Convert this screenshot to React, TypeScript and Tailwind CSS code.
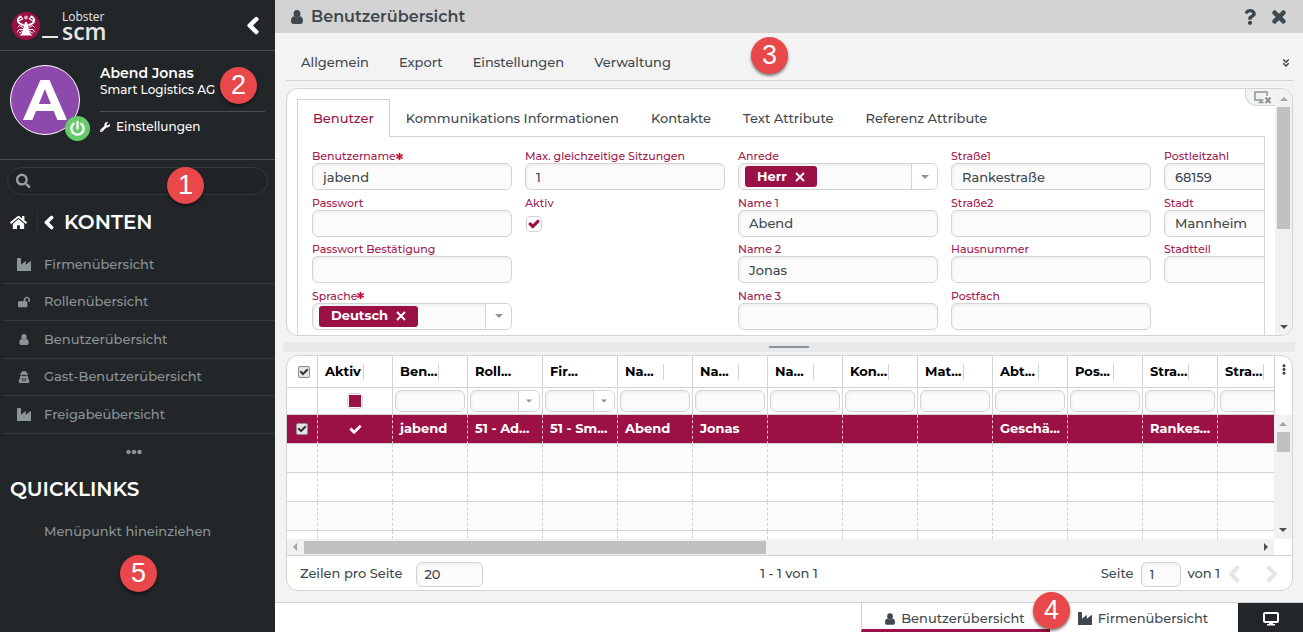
import React, { useState } from "react";
import type { ReactNode } from "react";
import {
  FaAngleDoubleDown,
  FaAsterisk,
  FaCheck,
  FaChevronLeft,
  FaChevronRight,
  FaEllipsisH,
  FaEllipsisV,
  FaHome,
  FaLockOpen,
  FaPowerOff,
  FaQuestion,
  FaSearch,
  FaTimes,
  FaUserSecret,
  FaWrench,
} from "react-icons/fa";

type IconProps = { className?: string };

function IndustryIcon({ className }: IconProps) {
  return (
    <svg viewBox="0 0 14 13" className={className} fill="currentColor" aria-hidden="true">
      <path d="M0 13V.6Q0 0 .6 0H3.400Q4 0 4 .6V6.800L8.300 3.200Q8.800 2.900 8.800 3.500V6.800L13.200 3.200Q14 2.800 14 3.500V13Z" />
    </svg>
  );
}

function UserIcon({ className }: IconProps) {
  return (
    <svg viewBox="0 0 12 14" className={className} fill="currentColor" aria-hidden="true">
      <ellipse cx="6" cy="3.800" rx="3.400" ry="3.800" />
      <path d="M2.700 6.300Q0 6.800 0 11.300Q0 14 2 14H10Q12 14 12 11.300Q12 6.800 9.300 6.300Q8 7.400 6 7.400Q4 7.400 2.700 6.300Z" />
    </svg>
  );
}

function DesktopIcon({ className }: IconProps) {
  return (
    <svg viewBox="0 0 16 14" className={className} aria-hidden="true">
      <rect x="1" y="1" width="14" height="9" rx="1" fill="none" stroke="currentColor" strokeWidth="2" />
      <path d="M6 10h4v2h2v1.500H4V12h2z" fill="currentColor" />
    </svg>
  );
}

function DetachIcon({ className }: IconProps) {
  return (
    <svg viewBox="0 0 18 13" className={className} fill="none" stroke="currentColor" aria-hidden="true">
      <path d="M9.500 9H1V1H13V5" strokeWidth="1.500" />
      <path d="M4.500 11.500H9.500M7 9V11.500" strokeWidth="1.500" />
      <path d="M11.500 6.500L16.500 12M16.500 6.500L11.500 12" strokeWidth="2.200" />
    </svg>
  );
}

function Lobster({ className }: IconProps) {
  return (
    <svg viewBox="0 0 28 28" className={className} aria-hidden="true">
      <circle cx="14" cy="14" r="14" fill="#9b1045" />
      <g fill="none" stroke="#fff" strokeLinecap="round">
        <path d="M8.500 4.500C4 7.500 5.500 11.500 11 13M19.500 4.500C24 7.500 22.500 11.500 17 13" strokeWidth="2" />
        <path d="M8.800 4.500L10.500 7L7.500 8.500M19.200 4.500L17.500 7L20.500 8.500" strokeWidth="1.300" />
        <path d="M11 15.500L7.500 13.500L6 15M10.500 17.500L7 17.500L5.500 20M10 19.500L7.500 21M17 15.500L20.500 13.500L22 15M17.500 17.500L21 17.500L22.500 20M18 19.500L20.500 21" strokeWidth="1" />
      </g>
      <circle cx="14" cy="5.500" r="1.900" fill="#e7a9c0" />
      <path d="M14 9.500C15.500 10.500 16 13 16.500 15.500C17 18 18 19.500 18 21L20.500 23.500H7.500L10 21C10 19.500 11 18 11.500 15.500C12 13 12.500 10.500 14 9.500Z" fill="#fff" />
    </svg>
  );
}

function Triangle({ dir, className }: { dir: "up" | "down" | "left" | "right"; className?: string }) {
  const d = {
    up: "M0 6L4 2L8 6Z",
    down: "M0 2L4 6L8 2Z",
    left: "M6 0L2 4L6 8Z",
    right: "M2 0L6 4L2 8Z",
  }[dir];
  return (
    <svg viewBox="0 0 8 8" className={`size-2 ${className ?? ""}`} fill="currentColor" aria-hidden="true">
      <path d={d} />
    </svg>
  );
}

function Marker({ n, className }: { n: number; className: string }) {
  return (
    <span
      className={`absolute z-10 flex size-[37px] items-center justify-center rounded-full bg-[#e84849] font-['Liberation_Sans',sans-serif] text-[27px] leading-none text-white shadow-[0_2px_3px_rgba(0,0,0,0.5)] ${className}`}
    >
      {n}
    </span>
  );
}

const FIELD =
  "rounded-md border border-[#d3d3d3] bg-[#fbfbfb] font-medium shadow-[inset_1px_2px_3px_rgba(0,0,0,0.05)] outline-none";

/* ---------- Sidebar ---------- */

const MENU = [
  { label: "Firmenübersicht", icon: <IndustryIcon className="h-[13px] w-3.5" /> },
  { label: "Rollenübersicht", icon: <FaLockOpen className="size-3" /> },
  { label: "Benutzerübersicht", icon: <UserIcon className="h-[11px] w-2.5" /> },
  { label: "Gast-Benutzerübersicht", icon: <FaUserSecret className="size-3" /> },
  { label: "Freigabeübersicht", icon: <IndustryIcon className="h-[13px] w-3.5" /> },
];

function Sidebar() {
  return (
    <aside className="relative flex w-[275px] shrink-0 flex-col bg-[#222629] text-white">
      <div className="flex h-[51px] items-center justify-between border-b border-[#4b4f51] pr-4 pl-3">
        <div className="flex items-end gap-0.5 text-[#e6e6e6]">
          <Lobster className="size-7" />
          <span className="mb-0.5 h-0.5 w-4 bg-[#e6e6e6]" />
          <span className="ml-0.5 flex flex-col font-['Open_Sans',sans-serif]">
            <span className="text-[12px] leading-[11px]">Lobster</span>
            <span className="text-[23px] leading-[18px] font-semibold">scm</span>
          </span>
        </div>
        <button aria-label="Menü einklappen">
          <FaChevronLeft className="h-[19px] w-3 overflow-visible stroke-current [stroke-width:40]" />
        </button>
      </div>

      <section className="flex h-[109px] gap-5 border-b border-[#4b4f51] pt-3.5 pr-2.5 pl-2.5">
        <div className="relative flex size-[70px] shrink-0 items-center justify-center rounded-full border border-white bg-[#8e49ac] text-[56px] leading-none font-bold">
          A
          <button
            aria-label="Abmelden"
            className="absolute -right-[11px] -bottom-[7px] flex size-[25px] items-center justify-center rounded-full bg-[#66cc6a]"
          >
            <FaPowerOff className="size-[15px]" />
          </button>
        </div>
        <div className="flex-1">
          <div className="text-[14px] leading-4 font-semibold">Abend Jonas</div>
          <div className="border-b border-[#4b4f51] pb-3 text-[12px] leading-[18px] font-medium">Smart Logistics AG</div>
          <a href="#einstellungen" className="flex items-center gap-1.5 pt-1.5 text-[12px] leading-[18px] font-medium">
            <FaWrench className="size-2.5" />
            Einstellungen
          </a>
        </div>
      </section>

      <label className="mx-[7px] mt-[7px] flex h-7 items-center rounded-[14px] border border-[#33383a] bg-[#202426] px-2">
        <FaSearch className="size-4 text-[#9aa0a3]" />
        <input aria-label="Suche" type="search" className="ml-2 w-full bg-transparent text-[13px] outline-none" />
      </label>

      <div className="mt-2 flex h-[38px] items-center pl-2.5">
        <button aria-label="Startseite">
          <FaHome className="size-[17px]" />
        </button>
        <span className="ml-2.5 h-6 w-px bg-[#2b3033]" />
        <button className="flex items-center gap-2.5 text-[20px] leading-6 font-semibold">
          <FaChevronLeft className="ml-1.5 h-[15px] w-2.5 overflow-visible stroke-current [stroke-width:40]" />
          KONTEN
        </button>
      </div>

      <nav className="mt-[5px] ml-0.5 grid h-[188px] auto-rows-fr">
        {MENU.map((m) => (
          <a
            key={m.label}
            href="#menu"
            className="flex items-center border-b border-[#34393b] pl-3.5 text-[13px] font-medium text-[#8b9497]"
          >
            <span className="flex w-4 justify-center">{m.icon}</span>
            <span className="ml-3">{m.label}</span>
          </a>
        ))}
      </nav>
      <button aria-label="Mehr" className="flex h-[35px] items-center justify-center pr-2 text-[#8b9497]">
        <FaEllipsisH className="size-4" />
      </button>
      <h2 className="mt-2 pl-2.5 text-[20px] leading-6 font-semibold">QUICKLINKS</h2>
      <p className="mt-5 pl-11 text-[13px] leading-5 font-medium text-[#8b9497]">Menüpunkt hineinziehen</p>

      <Marker n={2} className="top-[67px] left-[220px]" />
      <Marker n={1} className="top-[167px] left-[167px]" />
      <Marker n={5} className="top-[555px] left-[120px]" />
    </aside>
  );
}

/* ---------- Form ---------- */

function Label({ htmlFor, required, children }: { htmlFor: string; required?: boolean; children: ReactNode }) {
  return (
    <label htmlFor={htmlFor} className="flex items-center text-[11px] leading-[14px] font-medium whitespace-nowrap text-[#a3204f]">
      {children}
      {required && <FaAsterisk className="size-[7px] overflow-visible stroke-current text-[#c8102e] [stroke-width:40]" />}
    </label>
  );
}

function TextField({ id, label, value = "", required, type = "text" }: { id: string; label: string; value?: string; required?: boolean; type?: string }) {
  return (
    <div>
      <Label htmlFor={id} required={required}>{label}</Label>
      <input id={id} type={type} defaultValue={value} className={`${FIELD} block h-[27px] w-full px-2.5 text-[13px]`} />
    </div>
  );
}

function TagField({ id, label, tag, required }: { id: string; label: string; tag: string; required?: boolean }) {
  return (
    <div>
      <Label htmlFor={id} required={required}>{label}</Label>
      <div className={`${FIELD} flex h-[27px] items-center overflow-hidden pl-1.5`}>
        <button className="flex h-[21px] shrink-0 items-center gap-2 rounded-[3px] bg-[#9b1045] px-3 text-[13px] font-bold text-white">
          {tag}
          <svg viewBox="0 0 10 10" className="size-2.5" aria-hidden="true">
            <path d="M1 1L9 9M9 1L1 9" stroke="currentColor" strokeWidth="1.800" />
          </svg>
        </button>
        <input id={id} role="combobox" aria-expanded="false" className="min-w-0 flex-1 bg-transparent outline-none" />
        <button aria-label={`${label} öffnen`} className="flex h-full w-[26px] items-center justify-center border-l border-[#d3d3d3] bg-white text-[#8b9497]">
          <Triangle dir="down" />
        </button>
      </div>
    </div>
  );
}

const TABS = ["Benutzer", "Kommunikations Informationen", "Kontakte", "Text Attribute", "Referenz Attribute"];

function FormPanel() {
  const [tab, setTab] = useState(0);
  return (
    <section className="relative flex h-[248px] shrink-0 overflow-hidden rounded-xl border border-[#d3d3d3] bg-white">
      <div className="flex min-w-0 flex-1 flex-col pt-2.5 pr-2.5 pl-2.5">
        <div role="tablist" className="flex h-[38px] shrink-0">
          {TABS.map((t, i) => (
            <button
              key={t}
              role="tab"
              aria-selected={tab === i}
              onClick={() => setTab(i)}
              className={
                tab === i
                  ? "border border-b-0 border-[#d3d3d3] px-[15px] text-[13px] font-medium whitespace-nowrap text-[#9b1045]"
                  : "border-b border-[#d3d3d3] px-4 pt-0.5 text-[13px] font-medium whitespace-nowrap"
              }
            >
              {t}
            </button>
          ))}
          <span className="flex-1 border-b border-[#d3d3d3]" />
        </div>
        <div className="min-h-0 flex-1 overflow-hidden border-x border-[#d3d3d3] pt-3 pl-3.5">
          <div className="grid h-[186px] auto-cols-[200px] grid-flow-col grid-rows-4 gap-x-[13px]">
            <TextField id="user" label="Benutzername" value="jabend" required />
            <TextField id="pw" label="Passwort" type="password" />
            <TextField id="pw2" label="Passwort Bestätigung" type="password" />
            <TagField id="lang" label="Sprache" tag="Deutsch" required />

            <TextField id="sessions" label="Max. gleichzeitige Sitzungen" value="1" />
            <div className="row-span-3">
              <Label htmlFor="active">Aktiv</Label>
              <span className="mt-1.5 ml-px grid size-4 place-items-center">
                <input
                  id="active"
                  type="checkbox"
                  defaultChecked
                  className="peer col-start-1 row-start-1 size-4 appearance-none rounded-sm border border-[#d3d3d3] bg-white"
                />
                <FaCheck className="pointer-events-none invisible col-start-1 row-start-1 size-2.5 overflow-visible stroke-current text-[#9b1045] [stroke-width:60] peer-checked:visible" />
              </span>
            </div>

            <TagField id="title" label="Anrede" tag="Herr" />
            <TextField id="name1" label="Name 1" value="Abend" />
            <TextField id="name2" label="Name 2" value="Jonas" />
            <TextField id="name3" label="Name 3" />

            <TextField id="street1" label="Straße1" value="Rankestraße" />
            <TextField id="street2" label="Straße2" />
            <TextField id="house" label="Hausnummer" />
            <TextField id="pobox" label="Postfach" />

            <TextField id="zip" label="Postleitzahl" value="68159" />
            <TextField id="city" label="Stadt" value="Mannheim" />
            <TextField id="district" label="Stadtteil" />
          </div>
        </div>
      </div>
      <div className="flex w-[17px] shrink-0 flex-col items-center bg-[#f1f1f1] py-1">
        <Triangle dir="up" className="mt-0.5 text-[#a3a3a3]" />
        <div className="mt-1 h-[122px] w-[13px] bg-[#c1c1c1]" />
        <Triangle dir="down" className="mt-auto text-[#505050]" />
      </div>
      <button
        aria-label="Ansicht anpassen"
        className="absolute top-0 right-[17px] flex h-[17px] w-[30px] items-center justify-center rounded-bl-xl border-b border-l border-[#d3d3d3] bg-[#f3f3f3] pl-1 text-[#8b9497]"
      >
        <DetachIcon className="h-[13px] w-[18px]" />
      </button>
    </section>
  );
}

/* ---------- Grid ---------- */

type Column = { title: string; value?: string; filter?: "select"; handle?: boolean };

const COLUMNS: Column[] = [
  { title: "Ben...", value: "jabend" },
  { title: "Roll...", value: "51 - Ad...", filter: "select", handle: false },
  { title: "Fir...", value: "51 - Sm...", filter: "select", handle: false },
  { title: "Na...", value: "Abend" },
  { title: "Na...", value: "Jonas" },
  { title: "Na..." },
  { title: "Kon..." },
  { title: "Mat..." },
  { title: "Abt...", value: "Geschä..." },
  { title: "Pos..." },
  { title: "Stra...", value: "Rankes..." },
  { title: "Stra..." },
];

function GridCheckbox({ label }: { label: string }) {
  return (
    <span className="mx-auto grid size-3 place-items-center">
      <input
        type="checkbox"
        defaultChecked
        aria-label={label}
        className="peer col-start-1 row-start-1 size-3 appearance-none rounded-[2px] border border-[#8f8f8f] bg-[#e4e4e4]"
      />
      <FaCheck className="pointer-events-none invisible col-start-1 row-start-1 size-2 overflow-visible stroke-current text-[#333] [stroke-width:50] peer-checked:visible" />
    </span>
  );
}

function HeaderCell({ title, handle = true }: { title: string; handle?: boolean }) {
  return (
    <div className="flex items-center">
      <span className="w-[38px] whitespace-nowrap">{title}</span>
      {handle && <span className="h-4 w-px bg-[#d3d3d3]" />}
    </div>
  );
}

const HEAD = "h-8 border-r border-b border-[#d3d3d3] pl-[7px] text-left font-bold text-black";
const FILTER = "h-[27px] border-r border-b border-[#d3d3d3] px-0.5";
const SELECTED = "h-[29px] border-r border-b border-dashed border-r-[#e8c3d0] border-b-[#d3d3d3] [border-bottom-style:solid]";

function DataGrid() {
  return (
    <section className="flex min-h-0 min-w-0 flex-1 flex-col overflow-hidden rounded-xl border border-[#d3d3d3] bg-white">
      <div className="flex min-h-0 flex-1">
        <div className="flex min-w-0 flex-1 flex-col">
          <div className="min-h-0 flex-1 overflow-hidden">
            <table className="w-[1006px] table-fixed border-separate border-spacing-0 text-[13px]">
              <colgroup>
                <col className="w-[31px]" />
                <col className="w-[75px]" />
                {COLUMNS.map((_, i) => (
                  <col key={i} className="w-[75px]" />
                ))}
              </colgroup>
              <thead>
                <tr>
                  <th className="h-8 border-r border-b border-[#d3d3d3] pl-1">
                    <GridCheckbox label="Alle auswählen" />
                  </th>
                  <th className={HEAD}>
                    <HeaderCell title="Aktiv" />
                  </th>
                  {COLUMNS.map((c, i) => (
                    <th key={i} className={HEAD}>
                      <HeaderCell title={c.title} handle={c.handle} />
                    </th>
                  ))}
                </tr>
                <tr>
                  <td className={FILTER} />
                  <td className={FILTER}>
                    <button aria-label="Filter Aktiv" className="mx-auto flex size-4 items-center justify-center rounded-sm border border-[#d3d3d3] bg-white">
                      <span className="size-3 bg-[#9b1045]" />
                    </button>
                  </td>
                  {COLUMNS.map((c, i) => (
                    <td key={i} className={FILTER}>
                      {c.filter ? (
                        <span className={`${FIELD} flex h-[22px] w-[70px] items-center overflow-hidden`}>
                          <select aria-label={`Filter ${c.title}`} className="h-full min-w-0 flex-1 appearance-none bg-transparent outline-none">
                            <option></option>
                          </select>
                          <span className="flex h-full w-[21px] items-center justify-center border-l border-[#d3d3d3] bg-white text-[#8b9497]">
                            <Triangle dir="down" className="scale-75" />
                          </span>
                        </span>
                      ) : (
                        <input aria-label={`Filter ${c.title}`} className={`${FIELD} block h-[22px] w-[70px] px-1.5`} />
                      )}
                    </td>
                  ))}
                </tr>
              </thead>
              <tbody>
                <tr className="bg-[#9b1045] font-bold text-white">
                  <td className={SELECTED}>
                    <GridCheckbox label="Zeile auswählen" />
                  </td>
                  <td className={SELECTED}>
                    <FaCheck className="mx-auto size-[11px] overflow-visible stroke-current [stroke-width:40]" />
                  </td>
                  {COLUMNS.map((c, i) => (
                    <td key={i} className={`${SELECTED} pl-[7px] whitespace-nowrap`}>
                      {c.value}
                    </td>
                  ))}
                </tr>
                {[0, 1, 2, 3].map((r) => (
                  <tr key={r} className="even:bg-[#fbfbfb]">
                    {Array.from({ length: COLUMNS.length + 2 }, (_, i) => (
                      <td key={i} className="h-[29px] border-r border-b border-dashed border-[#d3d3d3] [border-bottom-style:solid]" />
                    ))}
                  </tr>
                ))}
              </tbody>
            </table>
          </div>
          <div className="flex h-4 shrink-0 items-center bg-[#f1f1f1] px-1">
            <Triangle dir="left" className="text-[#a3a3a3]" />
            <div className="ml-[5px] h-[13px] w-[47.2%] bg-[#c1c1c1]" />
            <Triangle dir="right" className="ml-auto text-[#505050]" />
          </div>
        </div>
        <div className="flex w-[18px] shrink-0 flex-col">
          <button aria-label="Spalten" className="flex h-[59px] w-full items-start justify-center border-l border-[#d3d3d3] pt-2">
            <FaEllipsisV className="h-[11px] w-2.5" />
          </button>
          <div className="flex flex-1 flex-col items-center bg-[#f1f1f1] py-[5px]">
            <Triangle dir="up" className="text-[#a3a3a3]" />
            <div className="mt-1 h-5 w-[13px] bg-[#c1c1c1]" />
            <Triangle dir="down" className="mt-auto text-[#505050]" />
          </div>
          <div className="h-4" />
        </div>
      </div>
      <footer className="grid h-[35px] shrink-0 grid-cols-3 items-center border-t border-[#d3d3d3] pt-0.5 pr-3.5 pl-[13px] text-[13px] font-medium">
        <label className="flex items-center gap-3.5">
          Zeilen pro Seite
          <input defaultValue="20" className={`${FIELD} h-[25px] w-[67px] px-[7px]`} />
        </label>
        <span className="text-center">1 - 1 von 1</span>
        <div className="flex items-center justify-end">
          <label className="flex items-center gap-[7px]">
            Seite
            <input defaultValue="1" className={`${FIELD} h-[25px] w-10 px-2`} />
            von 1
          </label>
          <button aria-label="Zurück" className="ml-2 text-[#e4e6e7]">
            <FaChevronLeft className="h-[18px] w-3 overflow-visible stroke-current [stroke-width:40]" />
          </button>
          <button aria-label="Weiter" className="ml-[26px] text-[#e4e6e7]">
            <FaChevronRight className="h-[18px] w-3 overflow-visible stroke-current [stroke-width:40]" />
          </button>
        </div>
      </footer>
    </section>
  );
}

/* ---------- Page ---------- */

export default function App() {
  return (
    <div className="flex h-screen min-h-[600px] overflow-hidden bg-[#f3f3f3] font-['Montserrat','Inter',sans-serif] text-[#3f484e]">
      <Sidebar />
      <main className="relative flex min-w-0 flex-1 flex-col">
        <header className="flex h-[33px] shrink-0 items-center bg-[#d3d3d3] pr-[15px] pl-4">
          <UserIcon className="h-3.5 w-3" />
          <h1 className="ml-2 text-[16px] font-semibold">Benutzerübersicht</h1>
          <button aria-label="Hilfe" className="ml-auto">
            <FaQuestion className="size-4" />
          </button>
          <button aria-label="Schließen" className="ml-3">
            <FaTimes className="size-[18px] overflow-visible stroke-current [stroke-width:35]" />
          </button>
        </header>

        <nav className="mr-2.5 ml-[11px] flex h-12 shrink-0 items-center gap-[30px] border-b border-[#d3d3d3] pt-3 pl-[15px] text-[13px] font-medium">
          <button>Allgemein</button>
          <button>Export</button>
          <button>Einstellungen</button>
          <button>Verwaltung</button>
          <button aria-label="Mehr anzeigen" className="ml-auto pr-0.5">
            <FaAngleDoubleDown className="size-2.5" />
          </button>
        </nav>

        <div className="flex min-h-0 flex-1 flex-col pt-[7px] pb-[11px]">
          <div className="mr-2.5 ml-[11px]">
            <FormPanel />
          </div>
          <div className="mx-2 mt-1.5 mb-[3px] flex h-2.5 shrink-0 items-center justify-center bg-[#e7e8ea]">
            <span className="h-0.5 w-10 bg-[#8b9497]" />
          </div>
          <div className="mr-2.5 ml-[11px] flex min-h-0 flex-1">
            <DataGrid />
          </div>
        </div>

        <div className="flex h-[30px] shrink-0 justify-end border-t border-[#d3d3d3] bg-white text-[13px] font-medium">
          <div className="relative flex">
            <button className="flex w-[189px] items-center justify-center gap-1.5 border-b-[3px] border-l border-b-[#9b1045] border-l-[#d3d3d3] pt-[5px] pr-0.5">
              <UserIcon className="h-3 w-2.5" />
              Benutzerübersicht
            </button>
            <button className="flex w-[188px] items-center justify-center gap-1.5 pt-0.5 pr-0.5">
              <IndustryIcon className="h-[13px] w-3.5" />
              Firmenübersicht
            </button>
            <Marker n={4} className="-top-[11px] left-[172px]" />
          </div>
          <button aria-label="Desktop anzeigen" className="flex w-[65px] items-center justify-center bg-[#222629] pt-0.5 text-white">
            <DesktopIcon className="h-3.5 w-4" />
          </button>
        </div>
        <Marker n={3} className="top-[37px] left-[476px]" />
      </main>
    </div>
  );
}
